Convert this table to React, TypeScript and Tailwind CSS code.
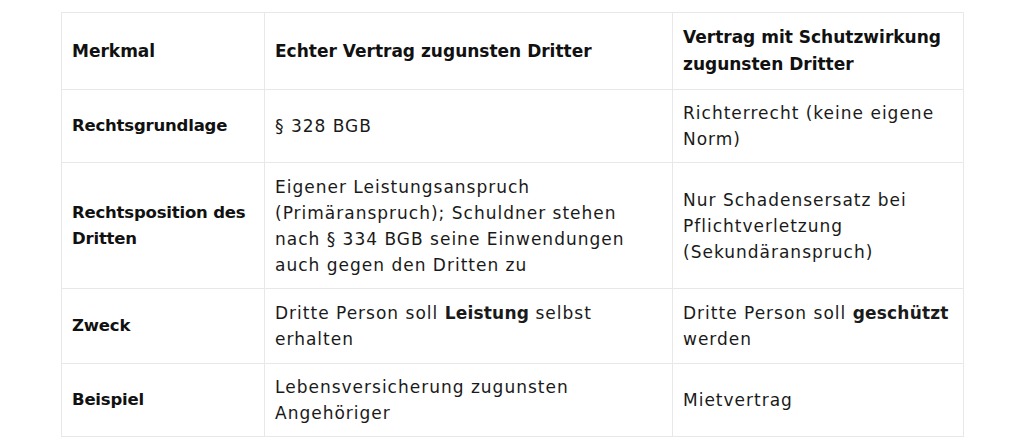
const rows: { label: string; a: React.ReactNode; b: React.ReactNode; pad: string }[] = [
  { label: "Rechtsgrundlage", a: "§ 328 BGB", b: "Richterrecht (keine eigene Norm)", pad: "py-[10px]" },
  {
    label: "Rechtsposition des Dritten",
    a: "Eigener Leistungsanspruch (Primäranspruch); Schuldner stehen nach § 334 BGB seine Einwendungen auch gegen den Dritten zu",
    b: "Nur Schadensersatz bei Pflichtverletzung (Sekundäranspruch)",
    pad: "py-[10.5px]",
  },
  {
    label: "Zweck",
    a: (
      <>
        Dritte Person soll <b className="font-bold tracking-[0.2px]">Leistung</b> selbst erhalten
      </>
    ),
    b: (
      <>
        Dritte Person soll <b className="font-bold tracking-[0.2px]">geschützt</b> werden
      </>
    ),
    pad: "py-[11px]",
  },
  { label: "Beispiel", a: "Lebensversicherung zugunsten Angehöriger", b: "Mietvertrag", pad: "py-[10px]" },
];

const bold = "font-['DejaVu_Sans',sans-serif] font-bold text-[17px] text-[#111]";
const reg = "font-['DejaVu_Sans',sans-serif] text-[17px] tracking-[1px] leading-[26px] text-[#1a1a1a]";

export default function App() {
  return (
    <div className="w-[1024px] h-[448px] bg-white pt-[12px] pl-[61px]">
      <table className="border-collapse w-[902px] table-fixed">
        <colgroup>
          <col className="w-[203px]" />
          <col className="w-[408px]" />
          <col className="w-[291px]" />
        </colgroup>
        <thead>
          <tr className="h-[77px]">
            <th className={`border border-[#e8e8e8] px-[10px] text-left leading-[27px] ${bold}`}>Merkmal</th>
            <th className={`border border-[#e8e8e8] px-[10px] text-left leading-[27px] ${bold}`}>
              Echter Vertrag zugunsten Dritter
            </th>
            <th className={`border border-[#e8e8e8] px-[10px] text-left leading-[27px] ${bold}`}>
              Vertrag mit Schutzwirkung zugunsten Dritter
            </th>
          </tr>
        </thead>
        <tbody>
          {rows.map((r) => (
            <tr key={r.label}>
              <td
                className={`border border-[#e8e8e8] px-[10px] ${r.pad} align-middle leading-[26px] font-['DejaVu_Sans',sans-serif] font-bold text-[16.5px] tracking-[-0.2px] text-[#111]`}
              >
                {r.label}
              </td>
              <td className={`border border-[#e8e8e8] px-[10px] ${r.pad} align-middle ${reg}`}>{r.a}</td>
              <td className={`border border-[#e8e8e8] px-[10px] ${r.pad} align-middle ${reg}`}>{r.b}</td>
            </tr>
          ))}
        </tbody>
      </table>
    </div>
  );
}
